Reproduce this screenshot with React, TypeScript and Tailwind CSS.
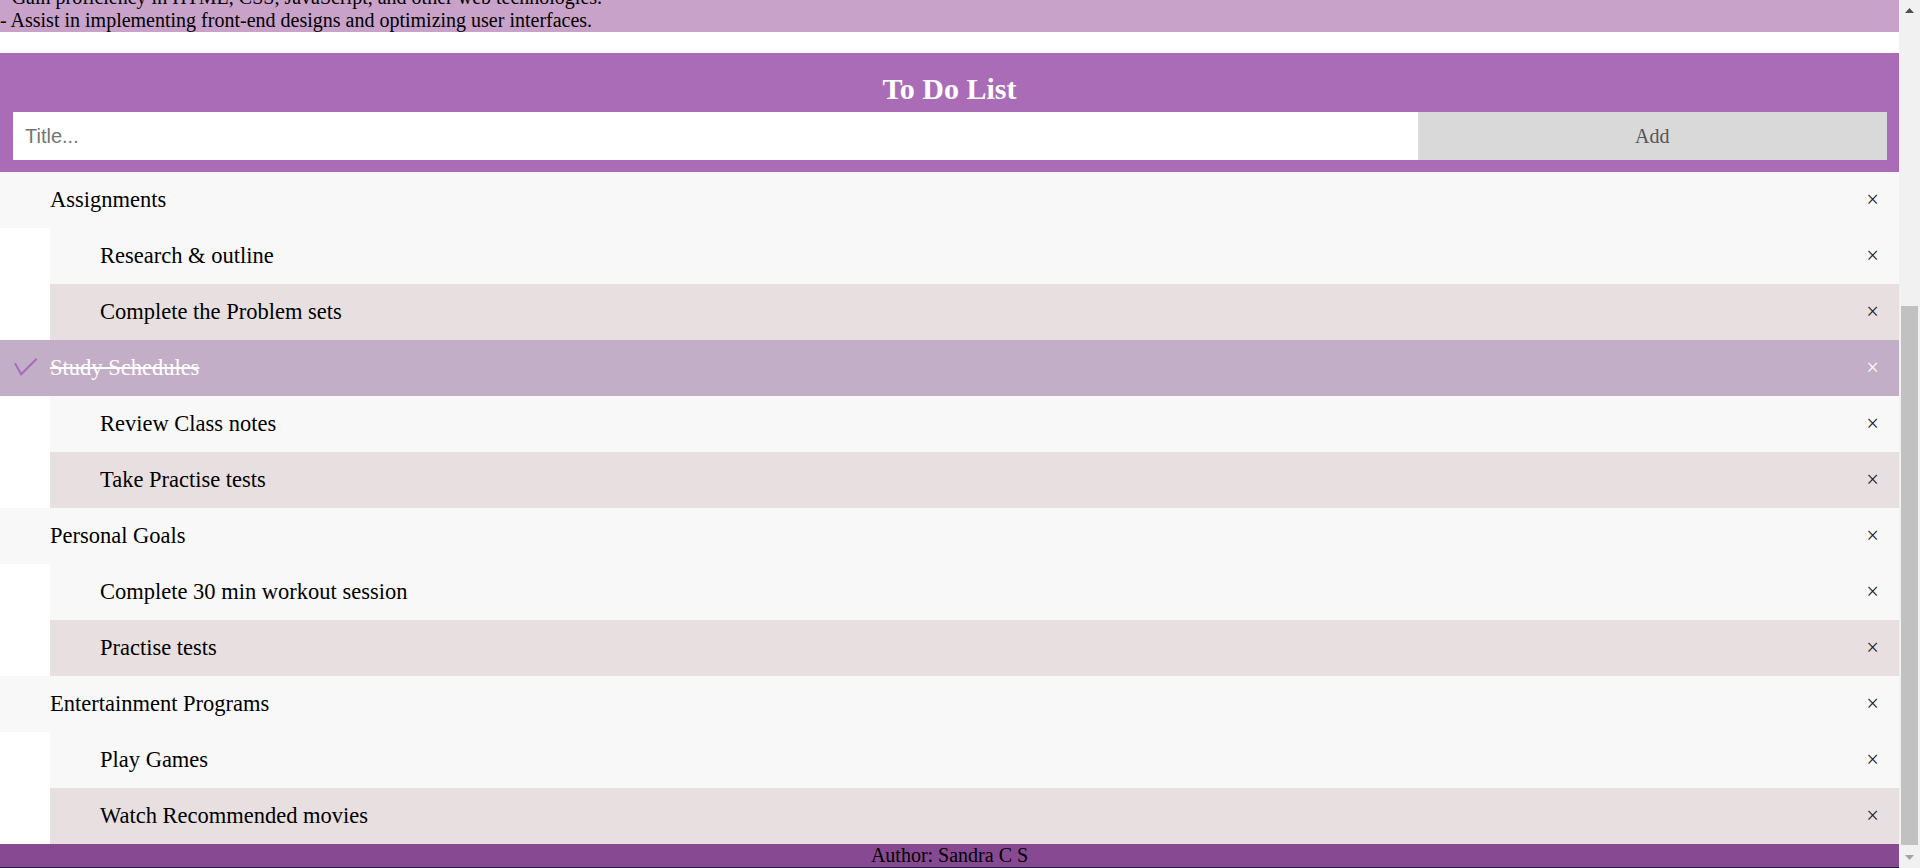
type Group = { title: string; checked?: boolean; children: string[] };

const groups: Group[] = [
  { title: 'Assignments', children: ['Research & outline', 'Complete the Problem sets'] },
  { title: 'Study Schedules', checked: true, children: ['Review Class notes', 'Take Practise tests'] },
  { title: 'Personal Goals', children: ['Complete 30 min workout session', 'Practise tests'] },
  { title: 'Entertainment Programs', children: ['Play Games', 'Watch Recommended movies'] },
];

const Close = ({ light }: { light?: boolean }) => (
  <span className={`pr-[20px] ${light ? 'text-white' : 'text-[#222]'}`}>×</span>
);

const Scrollbar = () => (
  <div className="flex w-[21px] shrink-0 flex-col bg-[#f1f1f1]">
    <div className="flex h-[21px] items-center justify-center">
      <svg width="9" height="5" viewBox="0 0 9 5">
        <path d="M0 5 L4.5 0 L9 5 Z" fill="#505050" />
      </svg>
    </div>
    <div className="flex flex-1 flex-col px-[2px] pt-[285px] pb-[2px]">
      <div className="flex-1 bg-[#c1c1c1]" />
    </div>
    <div className="flex h-[21px] items-center justify-center">
      <svg width="9" height="5" viewBox="0 0 9 5">
        <path d="M0 0 L4.5 5 L9 0 Z" fill="#a3a3a3" />
      </svg>
    </div>
  </div>
);

export default function App() {
  return (
    <div className="flex h-[868px] w-[1920px] overflow-hidden bg-white font-['Liberation_Serif',serif] text-black">
      <div className="flex w-[1899px] flex-col">
        <div className="-mt-[14px] bg-[#c8a2c8] text-[20px] leading-[23px]">
          <p>- Gain proficiency in HTML, CSS, JavaScript, and other web technologies.</p>
          <p>- Assist in implementing front-end designs and optimizing user interfaces.</p>
        </div>

        <div className="mt-[21px] bg-[#aa6cb6] px-[12.5px] pt-[19px] pb-[12px]">
          <h2 className="mb-[6px] text-center text-[30px] leading-[34px] font-bold text-white">To Do List</h2>
          <div className="flex">
            <input
              placeholder="Title..."
              className="h-[48px] w-3/4 bg-white px-[12.5px] font-['Liberation_Sans',Arial,sans-serif] text-[20px] leading-[23px] outline-none placeholder:text-[#757575]"
            />
            <span className="flex h-[48px] w-1/4 items-center justify-center bg-[#d9d9d9] text-[20px] text-[#555]">
              Add
            </span>
          </div>
        </div>

        <ul className="text-[22.5px] leading-[26px]">
          {groups.map((g) => (
            <li key={g.title}>
              <div
                className={`flex items-center justify-between py-[15px] ${
                  g.checked ? 'bg-[#c3aec8] pl-[14px] text-white' : 'bg-[#f8f8f8] pl-[50px]'
                }`}
              >
                <div className="flex items-center">
                  {g.checked && (
                    <svg width="24" height="20" viewBox="0 0 24 20" className="mr-[12px]">
                      <polyline points="1,5.3 7.2,16.3 22.7,0.8" fill="none" stroke="#a96bb5" strokeWidth="2" />
                    </svg>
                  )}
                  <span className={g.checked ? 'line-through' : ''}>{g.title}</span>
                </div>
                <Close light={g.checked} />
              </div>
              <ul className="ml-[50px]">
                {g.children.map((c, i) => (
                  <li
                    key={c}
                    className={`flex items-center justify-between py-[15px] pl-[50px] ${
                      i % 2 === 0 ? 'bg-[#f8f8f8]' : 'bg-[#e8dfe1]'
                    }`}
                  >
                    <span>{c}</span>
                    <Close />
                  </li>
                ))}
              </ul>
            </li>
          ))}
        </ul>

        <footer className="h-[24px] border-b border-[#1c1c3a] bg-[#874a92] text-center text-[20px] leading-[23px]">
          Author: Sandra C S
        </footer>
      </div>
      <Scrollbar />
    </div>
  );
}
